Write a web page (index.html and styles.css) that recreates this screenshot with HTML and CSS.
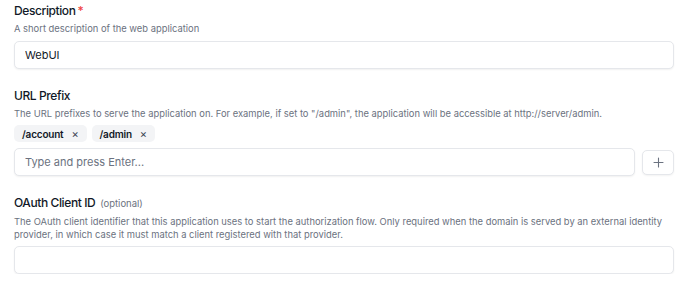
FILE: index.html
```html
<!DOCTYPE html>
<html lang="en">
<head>
    <meta charset="UTF-8">
    <meta name="viewport" content="width=device-width, initial-scale=1.0">
    <title>Application settings</title>
    <link rel="stylesheet" href="styles.css">
</head>
<body>
    <form class="app-form">
        <!-- Description -->
        <div class="field">
            <label class="field-label">Description<span class="required">*</span></label>
            <div class="field-help">A short description of the web application</div>
            <input class="text-input" type="text" value="WebUI">
        </div>

        <!-- URL Prefix -->
        <div class="field">
            <label class="field-label">URL Prefix</label>
            <div class="field-help">The URL prefixes to serve the application on. For example, if set to "/admin", the application will be accessible at http://server/admin.</div>
            <div class="chip-list">
                <span class="chip">/account <span class="chip-remove">&times;</span></span>
                <span class="chip">/admin <span class="chip-remove">&times;</span></span>
            </div>
            <div class="input-row">
                <input class="text-input" type="text" placeholder="Type and press Enter...">
                <button class="add-button" type="button">
                    <svg width="11" height="11" viewBox="0 0 11 11"><path d="M5.5 1v9M1 5.5h9" stroke="#6b7280" stroke-width="1.1" stroke-linecap="round"/></svg>
                </button>
            </div>
        </div>

        <!-- OAuth Client ID -->
        <div class="field">
            <label class="field-label">OAuth Client ID <span class="optional">(optional)</span></label>
            <div class="field-help">The OAuth client identifier that this application uses to start the authorization flow. Only required when the domain is served by an external identity provider, in which case it must match a client registered with that provider.</div>
            <input class="text-input" type="text">
        </div>
    </form>
</body>
</html>
```

FILE: styles.css
```css
body {
    font-family: Inter, "Noto Sans", sans-serif;
    background-color: #ffffff;
    color: #111827;
    margin: 0;
    padding: 0;
}
.app-form {
    display: flex;
    flex-direction: column;
    gap: 18px;
    padding: 2px 16px 0 14px;
}
.field {
    display: flex;
    flex-direction: column;
}
.field-label {
    font-size: 12px;
    font-weight: 500;
    line-height: 18px;
    letter-spacing: -0.4px;
}
.required {
    color: #ef4444;
    margin-left: 2px;
}
.optional {
    font-size: 9.5px;
    font-weight: 400;
    letter-spacing: 0;
    color: #6b7280;
    margin-left: 2px;
}
.field-help {
    font-size: 9.4px;
    color: #6b7280;
    line-height: 12.5px;
    margin-top: 3px;
    margin-bottom: 5px;
}
.text-input {
    box-sizing: border-box;
    width: 100%;
    height: 28px;
    padding: 0 10px;
    font-family: inherit;
    font-size: 11px;
    color: #111827;
    background: #ffffff;
    border: 1px solid #e5e7eb;
    border-radius: 5px;
    box-shadow: 0 1px 2px rgba(0, 0, 0, 0.06);
    outline: none;
}
.text-input::placeholder {
    color: #6b7280;
}
.chip-list {
    display: flex;
    gap: 5px;
    margin-bottom: 6px;
}
.chip {
    display: inline-flex;
    align-items: center;
    gap: 8px;
    height: 17px;
    padding: 0 8px;
    background: #f3f4f6;
    border-radius: 5px;
    font-size: 10px;
    font-weight: 600;
    letter-spacing: -0.2px;
    color: #111827;
}
.chip-remove {
    font-weight: 400;
    font-size: 11px;
    color: #374151;
}
.input-row {
    display: flex;
    align-items: center;
    gap: 7px;
}
.add-button {
    flex: none;
    width: 32px;
    height: 25px;
    display: flex;
    align-items: center;
    justify-content: center;
    background: #ffffff;
    border: 1px solid #e5e7eb;
    border-radius: 5px;
    box-shadow: 0 1px 2px rgba(0, 0, 0, 0.05);
    padding: 0;
}
```
